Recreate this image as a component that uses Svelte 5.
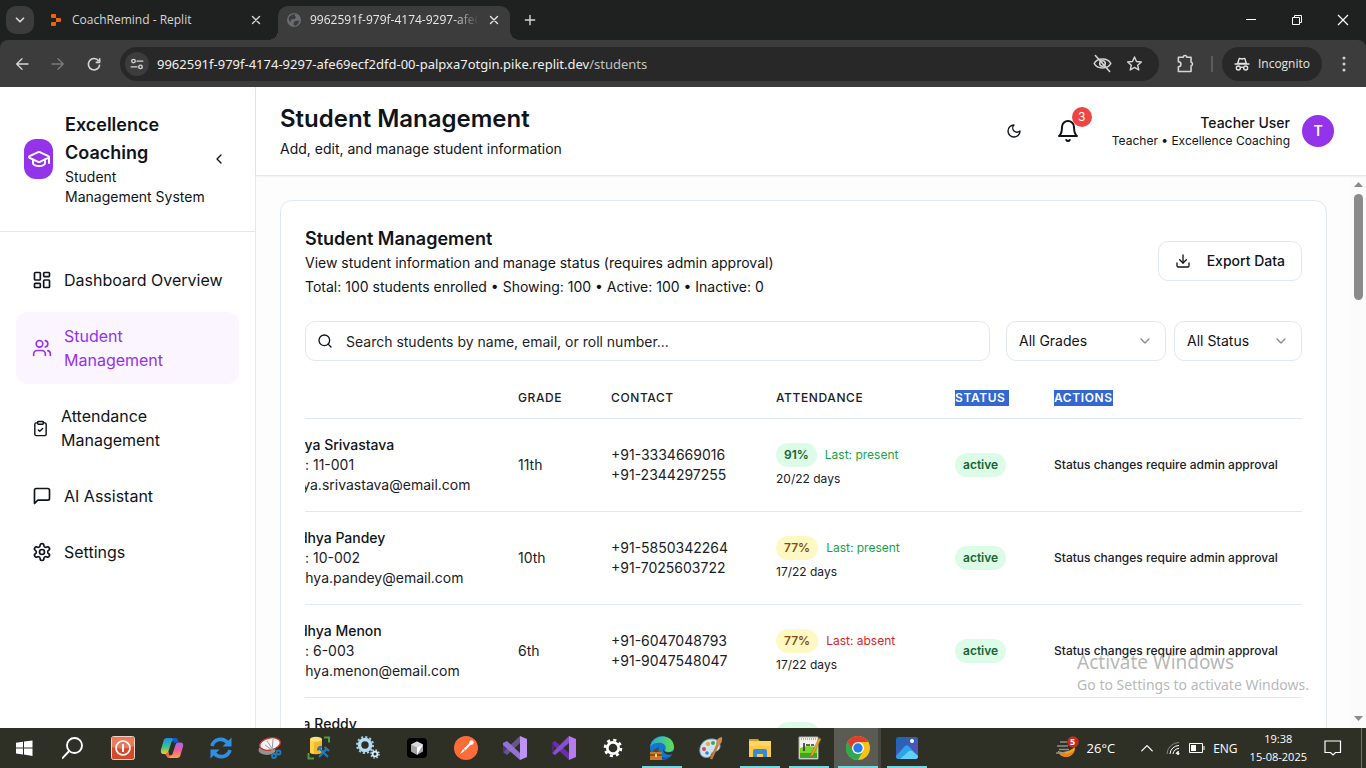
<script>
  const nav = [
    { icon: 'dashboard', label: 'Dashboard Overview' },
    { icon: 'users', label: 'Student Management', active: true },
    { icon: 'clipboard', label: 'Attendance Management', narrow: true },
    { icon: 'message', label: 'AI Assistant' },
    { icon: 'settings', label: 'Settings' }
  ];

  const students = [
    { name: 'Aarya Srivastava', roll: '11-001', email: 'aarya.srivastava@email.com', grade: '11th', phones: ['+91-3334669016', '+91-2344297255'], pct: 91, last: 'present', days: '20/22' },
    { name: 'Aadhya Pandey', roll: '10-002', email: 'aadhya.pandey@email.com', grade: '10th', phones: ['+91-5850342264', '+91-7025603722'], pct: 77, last: 'present', days: '17/22' },
    { name: 'Aadhya Menon', roll: '6-003', email: 'aadhya.menon@email.com', grade: '6th', phones: ['+91-6047048793', '+91-9047548047'], pct: 77, last: 'absent', days: '17/22' },
    { name: 'Diya Reddy', roll: '8-004', email: 'diya.reddy@email.com', grade: '8th', phones: ['+91-7310452286', '+91-8120934475'], pct: 95, last: 'present', days: '21/22' }
  ];

  const line = {
    dashboard: '<rect width="7" height="9" x="3" y="3" rx="1"/><rect width="7" height="5" x="14" y="3" rx="1"/><rect width="7" height="9" x="14" y="12" rx="1"/><rect width="7" height="5" x="3" y="16" rx="1"/>',
    users: '<path d="M16 21v-2a4 4 0 0 0-4-4H6a4 4 0 0 0-4 4v2"/><circle cx="9" cy="7" r="4"/><path d="M22 21v-2a4 4 0 0 0-3-3.87"/><path d="M16 3.13a4 4 0 0 1 0 7.75"/>',
    clipboard: '<rect width="8" height="4" x="8" y="2" rx="1"/><path d="M16 4h2a2 2 0 0 1 2 2v14a2 2 0 0 1-2 2H6a2 2 0 0 1-2-2V6a2 2 0 0 1 2-2h2"/><path d="m9 14 2 2 4-4"/>',
    message: '<path d="M21 15a2 2 0 0 1-2 2H7l-4 4V5a2 2 0 0 1 2-2h14a2 2 0 0 1 2 2z"/>',
    settings: '<path d="M12.22 2h-.44a2 2 0 0 0-2 2v.18a2 2 0 0 1-1 1.73l-.43.25a2 2 0 0 1-2 0l-.15-.08a2 2 0 0 0-2.73.73l-.22.38a2 2 0 0 0 .73 2.73l.15.1a2 2 0 0 1 1 1.72v.51a2 2 0 0 1-1 1.74l-.15.09a2 2 0 0 0-.73 2.73l.22.38a2 2 0 0 0 2.73.73l.15-.08a2 2 0 0 1 2 0l.43.25a2 2 0 0 1 1 1.73V20a2 2 0 0 0 2 2h.44a2 2 0 0 0 2-2v-.18a2 2 0 0 1 1-1.73l.43-.25a2 2 0 0 1 2 0l.15.08a2 2 0 0 0 2.73-.73l.22-.39a2 2 0 0 0-.73-2.73l-.15-.08a2 2 0 0 1-1-1.74v-.5a2 2 0 0 1 1-1.74l.15-.09a2 2 0 0 0 .73-2.73l-.22-.38a2 2 0 0 0-2.73-.73l-.15.08a2 2 0 0 1-2 0l-.43-.25a2 2 0 0 1-1-1.73V4a2 2 0 0 0-2-2z"/><circle cx="12" cy="12" r="3"/>',
    cap: '<path d="M21.42 10.922a1 1 0 0 0-.019-1.838L12.83 5.18a2 2 0 0 0-1.66 0L2.6 9.08a1 1 0 0 0 0 1.832l8.57 3.908a2 2 0 0 0 1.66 0z"/><path d="M22 10v6"/><path d="M6 12.5V16a6 3 0 0 0 12 0v-3.5"/>',
    left: '<path d="m15 18-6-6 6-6"/>',
    down: '<path d="m6 9 6 6 6-6"/>',
    up: '<path d="m3 17 9-9 9 9"/>',
    moon: '<path d="M12 3a6 6 0 0 0 9 9 9 9 0 1 1-9-9Z"/>',
    bell: '<path d="M6 8a6 6 0 0 1 12 0c0 7 3 9 3 9H3s3-2 3-9"/><path d="M10.3 21a1.94 1.94 0 0 0 3.4 0"/>',
    download: '<path d="M21 15v4a2 2 0 0 1-2 2H5a2 2 0 0 1-2-2v-4"/><path d="m7 10 5 5 5-5"/><path d="M12 15V3"/>',
    search: '<circle cx="11" cy="11" r="8"/><path d="m21 21-4.3-4.3"/>',
    close: '<path d="m6 6 12 12M18 6 6 18"/>',
    plus: '<path d="M12 4v16M4 12h16"/>',
    back: '<path d="M21 12H4M12 4l-8 8 8 8"/>',
    forward: '<path d="M3 12h17M12 4l8 8-8 8"/>',
    reload: '<path d="M19 7.5A8.5 8.5 0 1 0 20.5 13M20.500 3.500V9.500H14.500" stroke-linecap="butt"/>',
    tune: '<circle cx="6" cy="7" r="3"/><path d="M12 7h10M2 17h10"/><circle cx="18" cy="17" r="3"/>',
    eyeoff: '<path d="M1.500 12C5.500 4.500 18.500 4.500 22.500 12C18.500 19.500 5.500 19.500 1.500 12z"/><circle cx="12" cy="12" r="3.500"/><path d="M3 2l18 20"/>',
    star: '<path d="m12 2.800 2.800 6.300 6.900.7-5.200 4.600 1.500 6.800-6-3.600-6 3.600 1.500-6.800L2.300 9.800l6.900-.7z"/>',
    puzzle: '<path d="M3 4h6.200a2.200 2.200 0 0 1 4.400 0H19v6.500a2.300 2.300 0 0 1 0 4.500V22H3v-5.800a3.200 3.200 0 0 0 0-6.400z"/>',
    incognito: '<path d="M1.500 12h21"/><path d="M5.500 11 8 3.500l4 1 4-1 2.500 7.500z"/><circle cx="6.500" cy="18" r="3"/><circle cx="17.500" cy="18" r="3"/><path d="M9.500 17.500q2.500-1.400 5 0"/>'
  };

  const apps = [
    { name: 'Start', art: '<path fill="#fff" d="M3 6.800 10 5.800V11.600H3zM11 5.600 19.500 4.400V11.600H11zM3 12.500H10V18.400L3 17.400zM11 12.500H19.500V19.900L11 18.600z"/>' },
    { name: 'Search', art: '<g fill="none" stroke="#fff" stroke-width="1.900"><circle cx="12.500" cy="9.500" r="7.500"/><path d="M7.200 15 0 22.500"/></g>' },
    { name: 'Power', art: '<rect x=".5" y=".5" width="23" height="23" rx="2" fill="#d8492b" stroke="#f4d2c6"/><path d="M1 1h22v9Q12 15 1 11z" fill="#e97a5c"/><circle cx="12" cy="12" r="7" fill="none" stroke="#fff" stroke-width="1.700"/><path d="M12 8v8" stroke="#fff" stroke-width="2"/>' },
    { name: 'Copilot', art: '<defs><linearGradient id="ca" x2="0" y2="1"><stop stop-color="#1c8fe8"/><stop offset=".55" stop-color="#3cc08a"/><stop offset="1" stop-color="#f6cf24"/></linearGradient><linearGradient id="cb" x2="0" y2="1"><stop stop-color="#a865ef"/><stop offset=".5" stop-color="#ee5f96"/><stop offset="1" stop-color="#ffa14b"/></linearGradient></defs><path fill="url(#ca)" d="M7 2h8c2 0 2 1 1.500 2.500H14c-2 0-2.400 1-3 3L8.500 15C8 17 7 18 5 18H3.500C1 18 .5 16 1 13.500L3.500 5C4 3 5 2 7 2z"/><path fill="url(#cb)" d="M17 22H9.500c-2 0-2.500-1-2-2.500H10c2 0 2.500-1 3-3L15.500 9C16 7 17 6.500 19 6.500h1.500c2.500 0 3 2 2.500 4L20.500 19c-.5 2-1.500 3-3.500 3z"/><path fill="#1c55cf" d="M12 2h3.500c1.500 0 2 1 2.500 2.500l.6 2H17L14 7z"/><path fill="#f2654c" d="M5 18c2 0 3-1 3.500-3l1 5.500c0 1 0 1.500 1 1.500-2 0-3.500-.5-4-2z"/>' },
    { name: 'Sync', art: '<g fill="none" stroke="#2f8fe6" stroke-width="3.600"><path d="M3 10A9 9 0 0 1 18.500 6.500"/><path d="M21 14A9 9 0 0 1 5.500 17.500"/></g><path fill="#2f8fe6" d="M22.500 1.500V10.500H13.500zM1.500 22.500V13.500H10.500z"/>' },
    { name: 'Snipping Tool', art: '<ellipse cx="9" cy="14" rx="8.500" ry="5" fill="#929292"/><ellipse cx="12" cy="8" rx="10.500" ry="6" fill="#f4f4f4" stroke="#d52b2b" stroke-width="1.300" transform="rotate(-12 12 8)"/><path d="M7 9l10 7M9 5l6 9M15 3l-1 13" stroke="#9b9b9b" stroke-width="1"/><g fill="none" stroke="#1f80bd" stroke-width="1.800"><circle cx="16" cy="20" r="2"/><circle cx="20.500" cy="16.500" r="2"/></g>' },
    { name: 'Database Tools', art: '<path d="M3 3v13c0 3 12 3 12 0V3z" fill="#f5b921"/><path d="M3 3v13c0 1 2 2 4 2V3z" fill="#ffd24a"/><ellipse cx="9" cy="3.200" rx="6" ry="2.500" fill="#ffe07c"/><path d="M17 1.500h5v5M1.500 17v5.500H7" fill="none" stroke="#4a9d45" stroke-width="2"/><path d="m12 12 9 9M20 12.500l-8 8.500" stroke="#2479b8" stroke-width="2.200"/><path d="M11 14.500q0-4 4-3.500M17.500 11l4.500 4" fill="none" stroke="#2479b8" stroke-width="2.200"/>' },
    { name: 'Services', art: '<circle cx="9" cy="9" r="5.500" fill="none" stroke="#b6dcf2" stroke-width="3.600"/><circle cx="9" cy="9" r="8" fill="none" stroke="#a5cfea" stroke-width="2" stroke-dasharray="2.100 2.090"/><circle cx="19" cy="18" r="2.400" fill="none" stroke="#d9edf8" stroke-width="1.800"/><circle cx="19" cy="18" r="4" fill="none" stroke="#b7d8ed" stroke-width="1.500" stroke-dasharray="1.570 1.570"/>' },
    { name: 'Cursor', art: '<rect x="2" y="2" width="20" height="20" rx="4" fill="#000"/><path d="m12 5.500 6 3v7l-6 3.500-6-3.500v-7z" fill="#a5a5a5"/><path d="m6 8.500 6 3 6-3-6-3z" fill="#d8d8d8"/><path d="M18 8.500 12 19v-7.500z" fill="#fff"/>' },
    { name: 'Postman', art: '<circle cx="12" cy="12" r="12" fill="#ff6c37"/><path d="m5.500 18.500 3.500-5 7-7 1.500 1.500-7 7z" fill="#fff"/><circle cx="17.500" cy="6.500" r="2.200" fill="#fff"/><path d="m9.500 13 2 2" stroke="#ff6c37"/>' },
    { name: 'Visual Studio', art: '<path fill="#8f6fd0" d="M0 16 17 0v7L4 19z" opacity=".6"/><path fill="#4f338c" d="M0 7v10l4-4.500z"/><path fill="#9273d2" d="M0 7 4 5l13 12v7L0 9z"/><path fill="#bd94f4" d="m17 0 7 3v18l-7 3z"/>' },
    { name: 'Visual Studio Preview', art: '<path fill="#6a2fa8" d="m0 7 3-2 14 12v7L3 11z"/><path fill="#8a4fd0" d="M0 17 17 0v7L3 19z"/><path fill="#54218c" d="M0 7v10l2-1V8z"/><path fill="#b57bf0" d="m17 0 7 3v18l-7 3z"/>' },
    { name: 'Settings', art: '<circle cx="12" cy="12" r="5.700" fill="none" stroke="#fff" stroke-width="2.700"/><circle cx="12" cy="12" r="8" fill="none" stroke="#fff" stroke-width="2.600" stroke-dasharray="3.140 3.140"/>' },
    { name: 'Edge', open: true, art: '<defs><linearGradient id="eg"><stop stop-color="#2ba7dc"/><stop offset="1" stop-color="#5ee04f"/></linearGradient></defs><circle cx="12" cy="12" r="12" fill="#1677ca"/><path fill="url(#eg)" d="M0 11C2-2 23-4 24 11c0 5-6 6-9 4 3-6-3-9-8-8-3 0-6 2-7 4z"/><path fill="#12509e" d="M9 11c-3 7 4 14 12 9-3 4-12 5-16-1-2-4 0-7 4-8z"/><path fill="#2e3025" d="M13 12c0 4 4 6 11 3v3c-6 2-12 0-11-6z"/><rect y="16" width="12" height="8" fill="#c9792a"/><path d="M4 16v-2h4v2M0 19h12" stroke="#764210" stroke-width="1.500" fill="none"/><path fill="#ffd24d" d="M5 18h2v3H5z"/>' },
    { name: 'Paint', art: '<path d="M13 3C4 3 0 10 1 16c1 5 5 6 9 5 3-1 1-4 4-5 4-1 7-2 7-6 0-4-3-7-8-7z" fill="#cfe4f2" stroke="#87abc6"/><circle cx="5" cy="13" r="2" fill="#d9463e"/><circle cx="9" cy="8" r="2" fill="#e7a72c"/><circle cx="14" cy="7" r="2" fill="#3ba857"/><circle cx="8" cy="17" r="1.800" fill="#3c7fd0"/><path d="m12 23 7-15" stroke="#c77a3a" stroke-width="2.600"/><path d="M17 8q0-6 6-7 1 5-3 8z" fill="#d08b4e"/>' },
    { name: 'File Explorer', open: true, art: '<path d="M1 3h9l2 2.500H1z" fill="#dd9c17"/><path d="M1 5h22v16H1z" fill="#ffd566"/><path d="M1 10h22v11H1z" fill="#ffc847"/><path d="M5 21v-6q0-2 2-2h10q2 0 2 2v6h-4v-3H9v3z" fill="#318bd6"/>' },
    { name: 'Notepad++', open: true, art: '<path d="M2 1h19v22H2z" fill="#f0f0ec" stroke="#adadad"/><path d="M3 12q9-4 17 0v10H3z" fill="#78d52c"/><path d="M3 17h17v5H3z" fill="#3fa51f"/><path d="M4 3h16" stroke="#777" stroke-dasharray="1 1"/><path d="M7 7v8M9 9h4M14 9h3" stroke="#333" stroke-width="1.600"/><path d="m14 18 8-16 2 1-8 16-3 2z" fill="#eea82c" stroke="#94651c" stroke-width=".5"/>' },
    { name: 'Chrome', open: true, current: true, art: '<circle cx="12" cy="12" r="12" fill="#fbc116"/><path d="M1.600 6A12 12 0 0 1 22.400 6H12z" fill="#e33b2e"/><path d="M1.600 6A12 12 0 0 0 12 24l5.200-9L7 15z" fill="#2da94f"/><path d="M1.600 6 7 15l5-9z" fill="#e33b2e"/><path d="M1.600 6 6.800 15 12 18 9 22 1 17 0 11z" fill="#2da94f"/><circle cx="12" cy="12" r="6" fill="#fff"/><circle cx="12" cy="12" r="4.700" fill="#2a7de9"/>' },
    { name: 'Photos', open: true, art: '<defs><linearGradient id="ph" y2="1"><stop stop-color="#1668b8"/><stop offset="1" stop-color="#6b4bb5"/></linearGradient></defs><rect x="1" y="1" width="22" height="22" rx="2.500" fill="url(#ph)"/><circle cx="17" cy="5" r="2" fill="#fff"/><path d="M1 20 10 10q1.800-1.500 3.500 0L23 20v1q-.5 2-2.500 2h-17Q1 23 1 20z" fill="#2aa5ea"/><path d="M5 23 14 15q1.500-1 3 0l6 5q0 3-3 3z" fill="#63d0fa"/>' }
  ];
</script>

{#snippet icon(name, size, stroke = 2)}
  <svg class="icon" width={size} height={size} viewBox="0 0 24 24" fill="none" stroke="currentColor" stroke-width={stroke} stroke-linecap="round" stroke-linejoin="round" aria-hidden="true">{@html line[name]}</svg>
{/snippet}

<div class="screen">
  <div class="tabstrip">
    <button class="tab-search" aria-label="Search tabs">{@render icon('down', 14, 3)}</button>
    <div class="tab">
      <svg class="icon" width="16" height="16" viewBox="0 0 16 16" aria-hidden="true"><path fill="#f26207" d="M3 3q0-1 1-1h3q1 0 1 1v3H4q-1 0-1-1zM8 6h4q1 0 1 1v2q0 1-1 1H8zM4 10h4v3q0 1-1 1H4q-1 0-1-1v-2q0-1 1-1z"/></svg>
      <span class="tab-title">CoachRemind - Replit</span>
      <button class="bare" aria-label="Close tab">{@render icon('close', 14, 2.4)}</button>
    </div>
    <div class="tab current">
      <svg class="icon" width="16" height="16" viewBox="0 0 16 16" aria-hidden="true"><circle cx="8" cy="8" r="7" fill="#686b70"/><path d="M3 5q3-3 6-3-1 2 1 3-1 3-4 2-2 1-1 3-3-1-2-5zM8 10q2-2 5-1 0 3-4 5-2-1-1-4z" fill="#3c3c3c"/></svg>
      <span class="tab-title fade">9962591f-979f-4174-9297-afe69ecf2dfd</span>
      <button class="bare" aria-label="Close tab">{@render icon('close', 14, 2.4)}</button>
    </div>
    <button class="bare new-tab" aria-label="New tab">{@render icon('plus', 14, 2.4)}</button>
    <div class="window-buttons">
      <button class="bare" aria-label="Minimize"><svg width="12" height="12" viewBox="0 0 12 12"><path d="M1 5.500h10" stroke="#fff"/></svg></button>
      <button class="bare" aria-label="Restore"><svg width="12" height="12" viewBox="0 0 12 12" fill="none" stroke="#fff"><path d="M1.500 3.500h7v7h-7zM3.500 3.500v-2h7v7h-2"/></svg></button>
      <button class="bare" aria-label="Close"><svg width="12" height="12" viewBox="0 0 12 12"><path d="m1 1 10 10M11 1 1 11" stroke="#fff" stroke-width="1.200"/></svg></button>
    </div>
  </div>

  <div class="toolbar-back">
    <div class="toolbar">
      <button class="bare nav-button" aria-label="Back">{@render icon('back', 16)}</button>
      <button class="bare nav-button dim" aria-label="Forward">{@render icon('forward', 16)}</button>
      <button class="bare nav-button" aria-label="Reload">{@render icon('reload', 16, 2.4)}</button>
      <div class="omnibox">
        <button class="site-info" aria-label="Site information">{@render icon('tune', 14, 2.4)}</button>
        <span class="url">9962591f-979f-4174-9297-afe69ecf2dfd-00-palpxa7otgin.pike.replit.dev<span class="path">/students</span></span>
        <button class="bare nav-chip" aria-label="Third-party cookies blocked">{@render icon('eyeoff', 19, 2)}</button>
        <button class="bare nav-chip" aria-label="Bookmark">{@render icon('star', 17, 2)}</button>
      </div>
      <button class="bare extensions" aria-label="Extensions">{@render icon('puzzle', 19, 2)}</button>
      <span class="divider"></span>
      <span class="incognito">{@render icon('incognito', 16, 2)}Incognito</span>
      <button class="bare kebab" aria-label="Menu"><svg width="4" height="16" viewBox="0 0 4 16" fill="#d0d0d0"><circle cx="2" cy="2" r="1.500"/><circle cx="2" cy="8" r="1.500"/><circle cx="2" cy="14" r="1.500"/></svg></button>
    </div>
  </div>

  <div class="page">
    <aside>
      <div class="brand">
        <div class="logo">{@render icon('cap', 24)}</div>
        <div class="brand-text">
          <h1>Excellence Coaching</h1>
          <p>Student Management System</p>
        </div>
        <button class="bare collapse" aria-label="Collapse sidebar">{@render icon('left', 16)}</button>
      </div>
      <nav>
        {#each nav as item}
          <a href="#{item.icon}" class:active={item.active}>
            {@render icon(item.icon, item.narrow ? 17 : 20)}
            <span>{item.label}</span>
          </a>
        {/each}
      </nav>
    </aside>

    <div class="body">
      <header>
        <div class="heading">
          <h2>Student Management</h2>
          <p>Add, edit, and manage student information</p>
        </div>
        <button class="bare theme" aria-label="Dark mode">{@render icon('moon', 16)}</button>
        <button class="bare bell" aria-label="Notifications">{@render icon('bell', 24)}<span class="count">3</span></button>
        <div class="profile">
          <div class="who">
            <strong>Teacher User</strong>
            <small>Teacher • Excellence Coaching</small>
          </div>
          <div class="avatar">T</div>
        </div>
      </header>

      <div class="scroll">
        <main>
          <section class="card">
            <div class="card-head">
              <div>
                <h3>Student Management</h3>
                <p>View student information and manage status (requires admin approval)</p>
                <p class="totals">Total: 100 students enrolled • Showing: 100 • Active: 100 • Inactive: 0</p>
              </div>
              <button class="export">{@render icon('download', 16)}Export Data</button>
            </div>
            <div class="filters">
              <label class="search">
                {@render icon('search', 16)}
                <input type="text" aria-label="Search students" placeholder="Search students by name, email, or roll number..." />
              </label>
              <div class="selects">
                <label class="select grades">
                  <select aria-label="Grade"><option>All Grades</option></select>
                  {@render icon('down', 16)}
                </label>
                <label class="select status">
                  <select aria-label="Status"><option>All Status</option></select>
                  {@render icon('down', 16)}
                </label>
              </div>
            </div>
            <div class="table-wrap">
              <table>
                <colgroup><col /><col class="c-grade" /><col class="c-contact" /><col class="c-att" /><col class="c-status" /><col class="c-actions" /></colgroup>
                <thead>
                  <tr>
                    <th aria-label="Student"></th><th>Grade</th><th>Contact</th><th>Attendance</th>
                    <th><mark>Status&nbsp;</mark></th><th><mark>Actions</mark></th>
                  </tr>
                </thead>
                <tbody>
                  {#each students as s}
                    <tr>
                      <td>
                        <div class="name">{s.name}</div>
                        <div>Roll: {s.roll}</div>
                        <div>{s.email}</div>
                      </td>
                      <td>{s.grade}</td>
                      <td>{#each s.phones as phone}<div>{phone}</div>{/each}</td>
                      <td class="small">
                        <div class="att">
                          <span class="pill" class:warn={s.pct < 85}>{s.pct}%</span>
                          <span class="last" class:absent={s.last === 'absent'}>Last: {s.last}</span>
                        </div>
                        <div class="days">{s.days} days</div>
                      </td>
                      <td><span class="pill">active</span></td>
                      <td class="small note">Status changes require admin approval</td>
                    </tr>
                  {/each}
                </tbody>
              </table>
            </div>
          </section>
        </main>
        <div class="scrollbar" aria-hidden="true">
          <svg width="9" height="5" viewBox="0 0 9 5"><path d="M0 5 4.500 0 9 5z" fill="#8b8b8b"/></svg>
          <div class="thumb"></div>
          <svg width="9" height="5" viewBox="0 0 9 5"><path d="m0 0 4.500 5L9 0z" fill="#8b8b8b"/></svg>
        </div>
      </div>
    </div>

    <div class="watermark">
      <div class="big">Activate Windows</div>
      <div>Go to Settings to activate Windows.</div>
    </div>
  </div>

  <div class="taskbar">
    {#each apps as app}
      <button class="app" class:open={app.open} class:current={app.current} aria-label={app.name}>
        <svg width="24" height="24" viewBox="0 0 24 24" aria-hidden="true">{@html app.art}</svg>
      </button>
    {/each}
    <div class="tray">
      <span class="weather">
        <svg width="24" height="24" viewBox="0 0 24 24" aria-hidden="true"><path d="M3 15q8 3 17-4a9 9 0 0 1-17 5z" fill="#f5a21d"/><path d="M5 18q7 1 14-3a8 8 0 0 1-14 3z" fill="#ee7f1a"/><path d="M5 6h7M2 10h11M4 13.500h10M1 17h9" stroke="#8c8f8f" stroke-width="1.600"/><circle cx="18" cy="6" r="5.800" fill="#c62a20"/></svg>
        <span class="alerts">5</span>
      </span>
      <span class="temp">26°C</span>
      <span class="slot caret">{@render icon('up', 14, 2.2)}</span>
      <span class="slot wifi"><svg width="14" height="14" viewBox="0 0 14 14" fill="none" stroke="#fff" aria-hidden="true"><path d="M1 13A12 12 0 0 1 13 1.500" stroke="#888"/><path d="M4 13a9 9 0 0 1 9-8.500M7 13a6 6 0 0 1 6-5.500M10 13a3 3 0 0 1 3-2.500"/><circle cx="12" cy="12.500" r="1" fill="#fff"/></svg></span>
      <span class="slot battery"><svg width="16" height="10" viewBox="0 0 16 10" fill="none" stroke="#fff" aria-hidden="true"><path d="M.5.500h13v9H.5z"/><path d="M15 3v4"/><path d="M2 2h5v6H2z" fill="#fff" stroke="none"/></svg></span>
      <span class="lang">ENG</span>
      <span class="clock"><span>19:38</span><span>15-08-2025</span></span>
      <span class="slot action"><svg width="18" height="18" viewBox="0 0 18 18" fill="none" stroke="#fff" stroke-width="1.200" aria-hidden="true"><path d="M1 2h15.500v11.500H11.500L9 16l-2.500-2.500H1z"/></svg></span>
      <span class="desktop-edge"></span>
    </div>
  </div>
</div>

<style>
  :global(body) { margin: 0; }
  * { box-sizing: border-box; }
  .screen { height: 100vh; display: flex; flex-direction: column; overflow: hidden; font-family: Inter, sans-serif; color: #0f141a; background: #fff; }
  h1, h2, h3, p { margin: 0; }
  .icon { display: block; flex: none; }
  button { font: inherit; color: inherit; }
  .bare { display: flex; align-items: center; justify-content: center; flex: none; padding: 0; border: 0; background: none; }

  .tabstrip, .toolbar, .taskbar { font-family: "Open Sans", "Noto Sans", sans-serif; }
  .tabstrip { flex: none; display: flex; align-items: center; height: 40px; padding-left: 6px; background: #1f2120; color: #d5d5d5; font-size: 12px; }
  .tab-search { display: flex; align-items: center; justify-content: center; width: 28px; height: 28px; padding: 0; border: 0; border-radius: 10px; background: #3c3c3c; }
  .tab { display: flex; align-items: center; gap: 8px; width: 226px; height: 34px; margin: 6px 6px 0 12px; padding: 0 9px 6px 2px; }
  .tab-title { flex: 1; overflow: hidden; white-space: nowrap; line-height: 18px; }
  .tab.current { position: relative; width: 232px; margin: 6px 0 0; padding-left: 8px; border-radius: 10px 10px 0 0; background: #3c3c3c; color: #e8e8e8; }
  .tab.current::before, .tab.current::after { content: ''; position: absolute; bottom: 0; width: 10px; height: 10px; }
  .tab.current::before { left: -10px; background: radial-gradient(circle at 0 0, transparent 10px, #3c3c3c 10px); }
  .tab.current::after { right: -10px; background: radial-gradient(circle at 100% 0, transparent 10px, #3c3c3c 10px); }
  .fade { mask-image: linear-gradient(to right, #000 85%, transparent); }
  .new-tab { width: 40px; height: 28px; }
  .window-buttons { display: flex; margin-left: auto; }
  .window-buttons .bare { width: 46px; height: 40px; }

  .toolbar-back { flex: none; background: #1f2120; }
  .toolbar { display: flex; align-items: center; height: 47px; padding: 0 14px 0 4px; border-radius: 8px 8px 0 0; background: #3c3c3c; color: #d5d5d5; }
  .nav-button { width: 36px; height: 36px; }
  .dim { color: #7b7b7b; }
  .omnibox { flex: 1; display: flex; align-items: center; height: 34px; margin-left: 8px; padding: 0 8px 0 5px; border-radius: 17px; background: #282828; }
  .site-info { display: flex; align-items: center; justify-content: center; flex: none; width: 24px; height: 24px; padding: 0; border: 0; border-radius: 50%; background: #3c3c3c; }
  .url { flex: 1; margin-left: 8px; overflow: hidden; white-space: nowrap; color: #f0f0f0; font-family: "Noto Sans", sans-serif; font-size: 13px; line-height: 20px; }
  .path { color: #c2c2c2; }
  .nav-chip { width: 32px; height: 28px; }
  .extensions { width: 24px; margin-left: 15px; }
  .divider { width: 2px; height: 16px; margin: 0 9px 0 13px; background: #5c5c5c; }
  .incognito { display: flex; align-items: center; gap: 8px; height: 34px; padding: 0 12px; border-radius: 17px; background: #282828; color: #e6e6e6; font-size: 12px; }
  .kebab { width: 16px; height: 28px; margin-left: 14px; }

  .page { position: relative; flex: 1; min-height: 0; display: flex; overflow: hidden; }
  aside { flex: none; width: 256px; border-right: 1px solid #e2e8f0; background: #fff; }
  .brand { display: flex; align-items: center; padding: 24px; border-bottom: 1px solid #e2e8f0; }
  .logo { flex: none; display: flex; align-items: center; justify-content: center; width: 29px; height: 40px; border-radius: 12px; background: #9333ea; color: #fff; }
  .brand-text { flex: 1; margin-left: 12px; }
  h1 { font-size: 18px; line-height: 28px; font-weight: 600; }
  .brand-text p { font-size: 14px; line-height: 20px; }
  .collapse { width: 24px; height: 32px; }
  nav { display: flex; flex-direction: column; gap: 8px; padding: 24px 16px; }
  nav a { display: flex; align-items: center; gap: 12px; padding: 12px 16px; border-radius: 12px; color: inherit; text-decoration: none; font-size: 16px; line-height: 24px; }
  nav a.active { background: #faf5ff; color: #9333ea; }

  .body { flex: 1; min-width: 0; display: flex; flex-direction: column; }
  header { position: relative; z-index: 1; flex: none; display: flex; align-items: center; padding: 16px 32px 16px 24px; border-bottom: 1px solid #e2e8f0; background: #fff; box-shadow: 0 1px 2px rgba(0, 0, 0, .05); }
  .heading { flex: 1; }
  h2 { font-size: 24px; line-height: 32px; font-weight: 600; }
  .heading p { margin-top: 4px; font-size: 14px; line-height: 20px; }
  .theme { width: 36px; height: 36px; }
  .bell { position: relative; width: 40px; height: 40px; margin: 0 24px 0 16px; }
  .count { position: absolute; top: -4px; right: -4px; width: 20px; height: 20px; border-radius: 50%; background: #ef4444; color: #fff; font-size: 12px; line-height: 20px; text-align: center; }
  .profile { display: flex; align-items: center; gap: 12px; }
  .who { display: flex; flex-direction: column; text-align: right; }
  .who strong { font-size: 14px; line-height: 20px; font-weight: 500; }
  .who small { font-size: 12px; line-height: 16px; }
  .avatar { width: 32px; height: 32px; border-radius: 50%; background: #9333ea; color: #fff; font-size: 14px; font-weight: 600; line-height: 32px; text-align: center; }

  .scroll { flex: 1; min-height: 0; display: flex; }
  main { flex: 1; min-width: 0; padding: 24px; overflow: hidden; background: #fdfdfd; }
  .card { padding: 24px; border: 1px solid #e2e8f0; border-radius: 12px; background: #fff; }
  .card-head { display: flex; align-items: center; justify-content: space-between; }
  h3 { font-size: 18px; line-height: 28px; font-weight: 600; }
  .card-head p { font-size: 14px; line-height: 20px; }
  .card-head .totals { margin-top: 4px; }
  .export { display: flex; align-items: center; gap: 16px; height: 40px; padding: 0 16px; border: 1px solid #e2e8f0; border-radius: 10px; background: #fff; font-size: 14px; line-height: 20px; font-weight: 500; }
  .filters { display: flex; gap: 16px; margin-top: 24px; }
  .search { position: relative; flex: 1; }
  .search .icon { position: absolute; left: 12px; top: 12px; }
  input { width: 100%; height: 40px; padding: 0 12px 0 40px; border: 1px solid #e2e8f0; border-radius: 10px; background: #fff; font: 14px Inter, sans-serif; color: inherit; }
  input::placeholder { color: #1d2228; opacity: 1; }
  .selects { display: flex; gap: 8px; }
  .select { position: relative; }
  .grades { width: 160px; }
  .status { width: 128px; }
  select { appearance: none; width: 100%; height: 40px; padding: 0 12px; border: 1px solid #e2e8f0; border-radius: 10px; background: #fff; font: 14px/20px Inter, sans-serif; color: inherit; }
  .select .icon { position: absolute; right: 13px; top: 12px; color: #888b8e; pointer-events: none; }

  .table-wrap { display: flex; justify-content: flex-end; margin-top: 16px; overflow: hidden; }
  table { flex: none; width: 100%; min-width: 1045px; table-layout: fixed; border-collapse: collapse; font-size: 14px; line-height: 20px; color: #1b2027; }
  .c-grade { width: 93px; }
  .c-contact { width: 165px; }
  .c-att { width: 179px; }
  .c-status { width: 99px; }
  .c-actions { width: 272px; }
  tr { border-bottom: 1px solid #e2e8f0; }
  th { height: 41px; padding: 2px 24px 0; text-align: left; text-transform: uppercase; white-space: nowrap; font-size: 12px; line-height: 16px; font-weight: 500; letter-spacing: .05em; }
  mark { display: inline-block; background: #3367d1; color: #fff; font-weight: 600; }
  td { padding: 16px 24px; white-space: nowrap; }
  .name { font-weight: 500; color: #0f141a; }
  .small { font-size: 12px; line-height: 16px; }
  .note { font-weight: 500; }
  .att { display: flex; align-items: center; gap: 8px; }
  .pill { display: inline-block; padding: 4px 8px; border-radius: 12px; background: #dcfce7; color: #166534; font-size: 12px; line-height: 16px; font-weight: 600; }
  .pill.warn { background: #fef9c3; color: #854d0e; }
  .last { color: #16a34a; }
  .last.absent { color: #dc2626; }
  .days { margin-top: 4px; }

  .scrollbar { flex: none; display: flex; flex-direction: column; align-items: center; width: 15px; padding: 6px 0 7px; background: #fbfbfb; }
  .thumb { width: 9px; height: 106px; margin: 7px 0 auto; border-radius: 5px; background: #8b8b8b; }
  .watermark { position: absolute; z-index: 2; right: 57px; bottom: 33px; color: rgba(120, 120, 120, .55); font-family: "Noto Sans", sans-serif; font-size: 14px; line-height: 20px; }
  .watermark .big { font-size: 19px; line-height: 25px; }

  .taskbar { position: relative; z-index: 3; flex: none; display: flex; height: 40px; background: #2e3025; color: #fff; font-size: 12px; }
  .app { position: relative; flex: none; display: flex; align-items: center; justify-content: center; width: 49px; height: 40px; padding: 0; border: 0; background: none; }
  .app.open::after { content: ''; position: absolute; left: 5px; right: 4px; bottom: 0; height: 2px; background: #76d7de; }
  .app.current { background: linear-gradient(to right, transparent 1px, #5a5c53 1px, #5a5c53 45px, #45473e 45px, #45473e 48px, transparent 48px); }
  .tray { display: flex; align-items: center; margin-left: auto; }
  .weather { position: relative; display: flex; }
  .alerts { position: absolute; right: 3px; top: 0; width: 6px; font-size: 9px; line-height: 12px; font-weight: 700; text-align: center; }
  .temp { margin-left: 8px; font-size: 13px; }
  .slot { display: flex; align-items: center; justify-content: center; width: 24px; }
  .caret { margin: 0 2px 0 20px; }
  .lang { margin: 0 12px 0 4px; }
  .clock { display: flex; flex-direction: column; align-items: center; font-size: 11px; line-height: 18px; }
  .action { margin-left: 14px; }
  .desktop-edge { width: 5px; height: 40px; margin-left: 16px; border-left: 1px solid #73746c; }
</style>
